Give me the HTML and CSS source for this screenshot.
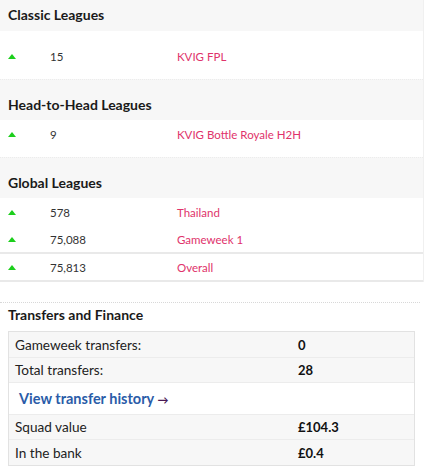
FILE: index.html
```html
<!DOCTYPE html>
<html lang="en">
<head>
<meta charset="UTF-8">
<title>Leagues and Transfers</title>
<link rel="stylesheet" href="styles.css">
</head>
<body>

<div class="leagues">
<div class="group">
<h3 class="group-head first">Classic Leagues</h3>
<div class="rows first-rows">
<div class="row"><span class="move"></span><span class="rank">15</span><span class="name">KVIG FPL</span></div>
</div>
</div>

<div class="group">
<h3 class="group-head">Head-to-Head Leagues</h3>
<div class="rows">
<div class="row"><span class="move"></span><span class="rank">9</span><span class="name">KVIG Bottle Royale H2H</span></div>
</div>
</div>

<div class="group">
<h3 class="group-head">Global Leagues</h3>
<div class="rows global">
<div class="row"><span class="move"></span><span class="rank">578</span><span class="name">Thailand</span></div>
<div class="row short"><span class="move"></span><span class="rank">75,088</span><span class="name">Gameweek 1</span></div>
<div class="row lined"><span class="move"></span><span class="rank">75,813</span><span class="name">Overall</span></div>
</div>
</div>
</div>

<div class="finance">
<h3>Transfers and Finance</h3>
<div class="finance-table">
<div class="frow"><span class="label">Gameweek transfers:</span><span class="value">0</span></div>
<div class="frow"><span class="label">Total transfers:</span><span class="value">28</span></div>
<div class="frow link-row"><a href="#">View transfer history <span class="arrow">&rarr;</span></a></div>
<div class="frow"><span class="label">Squad value</span><span class="value">&pound;104.3</span></div>
<div class="frow"><span class="label">In the bank</span><span class="value">&pound;0.4</span></div>
</div>
</div>

</body>
</html>
```

FILE: styles.css
```css
body {
margin: 0;
font-family: Lato, "Noto Sans", sans-serif;
color: #222;
background: #fff;
}
.leagues {
width: 423px;
border-right: 1px solid #f0f0f0;
}
.group-head {
margin: 0;
background-color: #f7f7f7;
height: 32px;
padding: 7px 8px 0;
box-sizing: border-box;
font-size: 14px;
font-weight: 700;
color: #1a1a1a;
border-top: 1px dotted #ececec;
}
.group-head.first {
height: 31px;
padding-top: 6px;
border-top: none;
}
.group + .group .group-head {
height: 41px;
padding-top: 16px;
}
.rows {
padding-bottom: 9px;
}
.rows.first-rows {
padding-top: 11px;
}
.rows.global {
padding-bottom: 0;
border-bottom: 2px solid #e9e9e9;
}
.row {
display: flex;
align-items: center;
height: 28px;
font-size: 11.5px;
}
.row.short {
height: 26px;
}
.row.lined {
border-top: 2px solid #e9e9e9;
height: 26px;
}
.move {
width: 0;
height: 0;
margin-left: 8px;
border-left: 4px solid transparent;
border-right: 4px solid transparent;
border-bottom: 5px solid #1ccf1c;
}
.rank {
width: 127px;
margin-left: 34px;
color: #333;
}
.name {
color: #e0336b;
}
.finance {
margin-top: 20px;
border-top: 1px dotted #d8d8d8;
width: 420px;
}
.finance h3 {
margin: 0;
padding: 3px 8px 0;
height: 28px;
box-sizing: border-box;
font-size: 14px;
font-weight: 700;
color: #1a1a1a;
}
.finance-table {
margin-left: 8px;
width: 407px;
box-sizing: border-box;
border: 1px solid #e2e2e2;
}
.frow {
display: flex;
align-items: center;
box-sizing: border-box;
height: 25px;
padding-left: 6px;
font-size: 13.6px;
background-color: #f7f7f7;
border-bottom: 1px solid #ececec;
}
.frow:first-child {
height: 26px;
}
.frow:last-child {
border-bottom: none;
}
.label {
width: 283px;
color: #222;
}
.value {
font-weight: 700;
font-size: 13px;
color: #111;
}
.link-row {
height: 32px;
background-color: #fff;
padding-left: 10px;
}
.link-row a {
color: #2a5ca8;
font-weight: 700;
font-size: 14.5px;
text-decoration: none;
}
.arrow {
color: #4a1a55;
font-size: 11px;
}
```
